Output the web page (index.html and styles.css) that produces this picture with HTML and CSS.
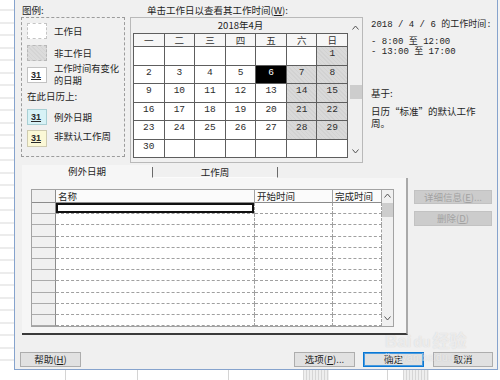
FILE: index.html
```html
<!DOCTYPE html>
<html lang="zh-CN">
<head>
<meta charset="utf-8">
<title>更改工作时间</title>
<link rel="stylesheet" href="styles.css">
</head>
<body>
<div class="screen">
  <div class="upper">
    <div class="sheet-left"></div>
    <div class="dialog">
      <div class="top">
        <div class="legend-col">
          <div class="caption">图例:</div>
          <div class="legend">
            <div class="item"><span class="sw sw-work"></span><span>工作日</span></div>
            <div class="item i2"><span class="sw sw-non"></span><span>非工作日</span></div>
            <div class="item i3"><span class="sw sw-31">31</span><span class="two">工作时间有变化<br>的日期</span></div>
            <div class="on-cal">在此日历上:</div>
            <div class="item i4"><span class="sw sw-31 sw-exc">31</span><span>例外日期</span></div>
            <div class="item i5"><span class="sw sw-31 sw-week">31</span><span class="up">非默认工作周</span></div>
          </div>
        </div>
        <div class="cal-col">
          <div class="caption cal-caption">单击工作日以查看其工作时间(<u>W</u>):</div>
          <div class="cal-box">
            <div class="cal-main">
              <div class="cal-title">2018年4月</div>
              <div class="cal-grid">
                <div class="wd">一</div><div class="wd">二</div><div class="wd">三</div><div class="wd">四</div><div class="wd">五</div><div class="wd">六</div><div class="wd">日</div>
                <div class="d"></div><div class="d"></div><div class="d"></div><div class="d"></div><div class="d"></div><div class="d"></div><div class="d off">1</div>
                <div class="d">2</div><div class="d">3</div><div class="d">4</div><div class="d">5</div><div class="d sel">6</div><div class="d off">7</div><div class="d off">8</div>
                <div class="d">9</div><div class="d">10</div><div class="d">11</div><div class="d">12</div><div class="d">13</div><div class="d off">14</div><div class="d off">15</div>
                <div class="d">16</div><div class="d">17</div><div class="d">18</div><div class="d">19</div><div class="d">20</div><div class="d off">21</div><div class="d off">22</div>
                <div class="d">23</div><div class="d">24</div><div class="d">25</div><div class="d">26</div><div class="d">27</div><div class="d off">28</div><div class="d off">29</div>
                <div class="d">30</div><div class="d"></div><div class="d"></div><div class="d"></div><div class="d"></div><div class="d"></div><div class="d"></div>
              </div>
            </div>
            <div class="vscroll">
              <svg class="arr" width="7" height="5" viewBox="0 0 7 5"><path d="M0.5 4.5 L3.5 1 L6.5 4.5" fill="none" stroke="#555" stroke-width="1"/></svg>
              <div class="thumb cal-thumb"></div>
              <svg class="arr arr-down" width="7" height="5" viewBox="0 0 7 5"><path d="M0.5 0.5 L3.5 4 L6.5 0.5" fill="none" stroke="#555" stroke-width="1"/></svg>
            </div>
          </div>
        </div>
        <div class="info-col">
          <div class="info-date">2018 / 4 / 6 的工作时间:</div>
          <div class="times">
            <div>- 8:00 至 12:00</div>
            <div>- 13:00 至 17:00</div>
          </div>
          <div class="based">基于:</div>
          <div class="based-text">日历“标准”的默认工作<br>周。</div>
        </div>
      </div>

      <div class="middle">
        <div class="tabs-area">
          <div class="tabs">
            <div class="tab active">例外日期</div>
            <div class="tab">工作周</div>
          </div>
          <div class="panel">
            <div class="grid-wrap">
              <div class="grid">
                <div class="h rh"></div><div class="h">名称</div><div class="h">开始时间</div><div class="h">完成时间</div>
                <div class="r"></div><div class="c focus"></div><div class="c"></div><div class="c"></div>
                <div class="r"></div><div class="c"></div><div class="c"></div><div class="c"></div>
                <div class="r"></div><div class="c"></div><div class="c"></div><div class="c"></div>
                <div class="r"></div><div class="c"></div><div class="c"></div><div class="c"></div>
                <div class="r"></div><div class="c"></div><div class="c"></div><div class="c"></div>
                <div class="r"></div><div class="c"></div><div class="c"></div><div class="c"></div>
                <div class="r"></div><div class="c"></div><div class="c"></div><div class="c"></div>
                <div class="r"></div><div class="c"></div><div class="c"></div><div class="c"></div>
                <div class="r"></div><div class="c"></div><div class="c"></div><div class="c"></div>
                <div class="r"></div><div class="c"></div><div class="c"></div><div class="c"></div>
                <div class="r"></div><div class="c"></div><div class="c"></div><div class="c"></div>
              </div>
              <div class="tscroll">
                <svg class="arr" width="7" height="5" viewBox="0 0 7 5"><path d="M0.5 4.5 L3.5 1 L6.5 4.5" fill="none" stroke="#555" stroke-width="1"/></svg>
                <div class="thumb t-thumb"></div>
                <svg class="arr arr-down2" width="7" height="5" viewBox="0 0 7 5"><path d="M0.5 0.5 L3.5 4 L6.5 0.5" fill="none" stroke="#555" stroke-width="1"/></svg>
              </div>
            </div>
          </div>
        </div>
        <div class="side">
          <div class="btn dis b1">详细信息(<u>E</u>)...</div>
          <div class="btn dis b2">删除(<u>D</u>)</div>
        </div>
      </div>

      <div class="bottom">
        <div class="btn help">帮助(<u>H</u>)</div>
        <div class="spacer"></div>
        <div class="btn opt">选项(<u>P</u>)...</div>
        <div class="btn ok">确定</div>
        <div class="btn cancel">取消</div>
      </div>
    </div>
    <div class="sheet-right"></div>
  </div>
  <div class="sheet-bottom">
    <span class="cell w65"></span><span class="cell w72"></span><span class="cell w91"></span><span class="cell w74"></span><span class="cell hatch w26"></span><span class="cell w59"></span><span class="cell w15"></span><span class="cell hatch w26"></span><span class="cell rest"></span>
  </div>
  <div class="wm">
    <div class="wm-logo">Bai<span class="wm-du">du</span>经验</div>
    <div class="wm-url">jingyan.baidu.com</div>
  </div>
</div>
</body>
</html>
```
FILE: styles.css
```css
html, body {
  margin: 0;
  padding: 0;
}
body {
  width: 500px;
  height: 380px;
  overflow: hidden;
  background: #fff;
  font-family: "Noto Sans CJK SC", "Liberation Sans", sans-serif;
  font-size: 9.5px;
  color: #1e1e1e;
}
u { text-decoration: underline; }

.screen {
  position: relative;
  display: flex;
  flex-direction: column;
  width: 500px;
  height: 380px;
}
.upper {
  display: flex;
  height: 370px;
}
.sheet-left {
  width: 14px;
  background-color: #fff;
  background-image: repeating-linear-gradient(180deg, transparent 0 11.5px, #d8d8d8 11.5px 12.5px);
  background-position: 0 -1.5px;
}
.sheet-right {
  width: 2px;
  background: #f3f3f3;
}
.dialog {
  width: 484px;
  box-sizing: border-box;
  background: #f0f0f0;
  border-left: 1px solid #86a3cd;
  border-right: 1px solid #86a3cd;
  border-bottom: 1px solid #86a3cd;
  display: flex;
  flex-direction: column;
}

/* ---------- top ---------- */
.top {
  display: flex;
  height: 163px;
  padding-left: 6px;
}
.legend-col {
  width: 104px;
}
.caption {
  height: 17px;
  line-height: 20px;
  padding-left: 1px;
  white-space: nowrap;
}
.legend {
  height: 140px;
  box-sizing: border-box;
  border: 1px dashed #9c9c9c;
  padding: 5px 0 0 5px;
}
.item {
  display: flex;
  align-items: center;
  gap: 7px;
  line-height: 11px;
}
.i2 { margin-top: 6px; }
.i3 { margin-top: 2px; }
.i4 { margin-top: 7px; }
.i5 { margin-top: 5px; }
.two {
  line-height: 11.5px;
  font-size: 9.3px;
}
.up { margin-top: -5px; }
.on-cal {
  margin-top: 4px;
  line-height: 12px;
  white-space: nowrap;
}
.sw {
  flex: none;
  width: 20px;
  height: 16px;
  box-sizing: border-box;
}
.sw-work {
  background: #fff;
  border: 1px dashed #c4c4c4;
}
.sw-non {
  border: 1px dashed #b8b8b8;
  background: repeating-linear-gradient(45deg, #d4d4d4 0 1px, #dbdbdb 1px 3px);
}
.sw-31 {
  background: #fff;
  border: 1px solid #c2c2c2;
  font-family: "Liberation Sans", sans-serif;
  font-weight: bold;
  font-size: 9px;
  line-height: 14px;
  padding-left: 3px;
  text-decoration: underline;
  color: #2a2a2a;
}
.sw-exc {
  background: #d7f2f6;
  border-color: #a9cfd4;
}
.sw-week {
  background: #fbf8d6;
  border-color: #cfcbb0;
  height: 17px;
}

.cal-col {
  width: 233px;
  margin-left: 5px;
}
.cal-caption {
  padding-left: 17px;
}
.cal-box {
  height: 146px;
  box-sizing: border-box;
  border: 1px solid #b9b9b9;
  padding-left: 2px;
  display: flex;
}
.cal-main {
  width: 216px;
}
.cal-title {
  height: 15px;
  line-height: 15px;
  text-align: center;
}
.cal-grid {
  display: grid;
  grid-template-columns: repeat(7, 1fr);
  grid-template-rows: 12px repeat(6, 17.5px);
  gap: 1px;
  padding: 1px;
  background: #5e5e5e;
}
.wd {
  background: #f6f6f6;
  text-align: center;
  line-height: 12px;
  font-size: 9.5px;
  color: #333;
}
.d {
  background: #fff;
  text-align: center;
  font-family: "Liberation Mono", monospace;
  font-size: 9.5px;
  line-height: 12px;
  padding-top: 1px;
  color: #2c2c2c;
}
.d.off {
  background: repeating-linear-gradient(45deg, #d2d2d2 0 1px, #d9d9d9 1px 3px);
}
.d.sel {
  background: #000;
  color: #fff;
}
.vscroll {
  width: 13px;
  margin-left: 1px;
  display: flex;
  flex-direction: column;
  align-items: center;
  padding-top: 7px;
  box-sizing: border-box;
}
.arr { display: block; }
.thumb {
  background: #cdcdcd;
}
.cal-thumb {
  width: 12px;
  height: 14px;
  margin-top: 55px;
}
.arr-down {
  margin-top: auto;
  margin-bottom: 8px;
}

.info-col {
  margin-left: 7px;
  padding-top: 19px;
  padding-left: 1px;
  font-family: "Liberation Mono", "Noto Sans CJK SC", monospace;
  font-size: 9px;
  white-space: nowrap;
}
.info-date { line-height: 12px; }
.times {
  margin-top: 6px;
  line-height: 10px;
}
.based {
  margin-top: 30px;
  line-height: 12px;
  font-family: "Noto Sans CJK SC", sans-serif;
  font-size: 9.5px;
}
.based-text {
  margin-top: 6px;
  line-height: 12px;
  font-family: "Noto Sans CJK SC", sans-serif;
  font-size: 9.5px;
}

/* ---------- middle ---------- */
.middle {
  display: flex;
  height: 173px;
  padding-left: 7px;
}
.tabs-area {
  width: 386px;
}
.tabs {
  display: flex;
  height: 15px;
  padding-top: 2px;
  box-sizing: border-box;
}
.tab {
  line-height: 13px;
  text-align: center;
  box-sizing: border-box;
}
.tab.active {
  width: 130px;
  background: #f6f6f6;
}
.tab:not(.active) {
  width: 126px;
  border-left: 1px solid #6a6a6a;
  border-right: 1px solid #6a6a6a;
  border-bottom: 1px solid #fbfbfb;
  margin-top: 2px;
  line-height: 11px;
}
.panel {
  height: 157px;
  box-sizing: border-box;
  background: #f6f6f6;
  border-right: 2px solid #a9a9a9;
  border-bottom: 2px solid #3a3a3a;
  padding: 11px 0 0 9px;
}
.grid-wrap {
  display: flex;
  width: 363px;
  box-sizing: border-box;
  border: 1px solid #a3a3a3;
}
.grid {
  display: grid;
  grid-template-columns: 24px 199px 78px 49px;
  grid-template-rows: 13px repeat(11, 11.2px);
}
.grid > div { box-sizing: border-box; }
.h {
  background: #fbfbfb;
  border-right: 1px solid #a3a3a3;
  border-bottom: 1px solid #8c8c8c;
  line-height: 12px;
  padding-left: 2px;
  font-size: 9.5px;
  white-space: nowrap;
}
.h.rh {
  background: #f0f0f0;
  border-right-color: #8c8c8c;
}
.r {
  background: #f0f0f0;
  border-right: 1px solid #8c8c8c;
  border-bottom: 1px solid #ababab;
}
.c {
  background: #fff;
  border-right: 1px dashed #a0a0a0;
  border-bottom: 1px dashed #a0a0a0;
}
.c.focus {
  box-shadow: inset 0 0 0 2px #111;
}
.tscroll {
  width: 11px;
  background: #f0f0f0;
  display: flex;
  flex-direction: column;
  align-items: center;
  padding-top: 3px;
  box-sizing: border-box;
}
.t-thumb {
  width: 11px;
  height: 14px;
  margin-top: 5px;
}
.arr-down2 {
  margin-top: auto;
  margin-bottom: 5px;
}

.side {
  margin-left: 6px;
  padding-top: 27px;
  display: flex;
  flex-direction: column;
  gap: 7px;
}
.btn {
  box-sizing: border-box;
  text-align: center;
  white-space: nowrap;
  font-size: 9.5px;
}
.btn.dis {
  width: 78px;
  background: #cccccc;
  border: 1px solid #c2c2c2;
  color: #a2a2a2;
}
.b1 { height: 14px; line-height: 12px; }
.b2 { height: 15px; line-height: 13px; }

/* ---------- bottom ---------- */
.bottom {
  display: flex;
  align-items: flex-start;
  padding: 16px 4px 0 5px;
  height: 33px;
  box-sizing: border-box;
}
.spacer { flex: 1; }
.bottom .btn {
  height: 15px;
  line-height: 13px;
  background: #e1e1e1;
  border: 1px solid #adadad;
  color: #1e1e1e;
}
.help { width: 61px; }
.opt { width: 61px; }
.ok {
  width: 61px;
  margin-left: 8px;
  border-color: #0a78d4 !important;
  box-shadow: inset 0 0 0 1px #4a9ade;
}
.cancel {
  width: 60px;
  margin-left: 9px;
}

/* ---------- spreadsheet strip ---------- */
.sheet-bottom {
  height: 10px;
  display: flex;
  background: #fff;
}
.cell {
  display: block;
  height: 10px;
  box-sizing: border-box;
  border-right: 1px solid #d4d4d4;
}
.w65 { width: 66px; }
.w72 { width: 72px; }
.w91 { width: 91px; }
.w74 { width: 74px; border-right: none; }
.w26 { width: 26px; border-right: none; }
.w59 { width: 59px; }
.w15 { width: 15px; border-right: none; }
.rest { flex: 1; border-right: none; }
.hatch {
  background: repeating-linear-gradient(90deg, #d6d6d6 0 1px, #eeeeee 1px 3px);
}

/* ---------- watermark ---------- */
.wm {
  position: absolute;
  left: 385px;
  top: 332px;
  color: rgba(255, 255, 255, 0.6);
  text-shadow: 0 0 1px rgba(120, 120, 120, 0.3);
  pointer-events: none;
}
.wm-logo {
  font-family: "Liberation Sans", "Noto Sans CJK SC", sans-serif;
  font-weight: bold;
  font-size: 17px;
  line-height: 20px;
  white-space: nowrap;
}
.wm-du {
  font-size: 14px;
  margin: 0 2px;
}
.wm-url {
  font-family: "Liberation Sans", sans-serif;
  font-size: 10px;
  line-height: 11px;
  letter-spacing: 0.3px;
}
```
